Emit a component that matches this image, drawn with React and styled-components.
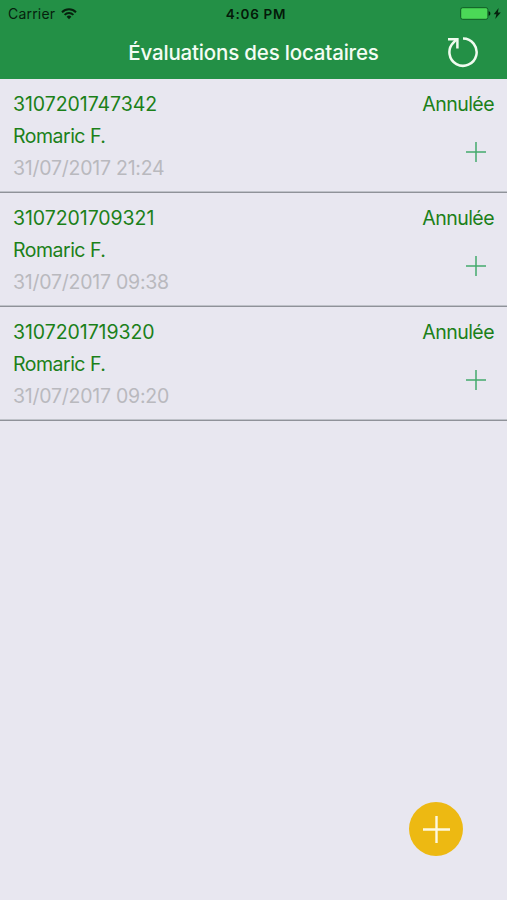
import React from "react";
import styled, { createGlobalStyle } from "styled-components";

const GlobalStyle = createGlobalStyle`
  * {
    box-sizing: border-box;
  }

  body {
    margin: 0;
    background: #e8e7f0;
    font-family: Inter, "Liberation Sans", sans-serif;
  }
`;

const Screen = styled.div`
  display: flex;
  flex-direction: column;
  width: 507px;
  height: 900px;
  background: #e8e7f0;
`;

const Header = styled.header`
  height: 79px;
  background: #239046;
`;

const StatusBar = styled.div`
  display: grid;
  grid-template-columns: 1fr auto 1fr;
  align-items: center;
  height: 27px;
  padding: 0 5px 0 8px;
  color: #06210d;
`;

const Carrier = styled.div`
  display: flex;
  align-items: center;
  gap: 6px;
  font-size: 14px;
  letter-spacing: 0.2px;
`;

const Clock = styled.div`
  padding-left: 2px;
  font-size: 13.5px;
  font-weight: 600;
  letter-spacing: 0.7px;
  color: #041a09;
`;

const Battery = styled.div`
  display: flex;
  justify-content: flex-end;
`;

const NavBar = styled.div`
  display: grid;
  grid-template-columns: 80px 1fr 80px;
  align-items: center;
  height: 51px;
`;

const Title = styled.h1`
  margin: 0;
  font-size: 20.5px;
  font-weight: 550;
  letter-spacing: -0.18px;
  text-align: center;
  white-space: nowrap;
  color: #f4fcf4;
`;

const IconButton = styled.button`
  display: flex;
  margin: 0;
  padding: 0;
  border: none;
  background: none;
`;

const RefreshButton = styled(IconButton)`
  margin: -2px 0 0 20px;
`;

const List = styled.ul`
  margin: 0;
  padding: 0;
  list-style: none;
`;

const Row = styled.li`
  display: flex;
  justify-content: space-between;
  height: 114px;
  padding: 9px 13px 0;
  border-bottom: 1px solid #8f9299;
  box-shadow: inset 0 -1px #bfc2c9;
`;

const Column = styled.div`
  display: flex;
  flex-direction: column;
  align-items: ${({ $end }) => ($end ? "flex-end" : "flex-start")};
`;

const Line = styled.span`
  font-size: 19.5px;
  line-height: 32px;
  letter-spacing: ${({ $spacing }) => $spacing || "0"};
  color: ${({ $muted }) => ($muted ? "#b9b9be" : "#1b8019")};
`;

const AddButton = styled(IconButton)`
  margin: 22px 8px 0 0;
`;

const Footer = styled.footer`
  display: flex;
  justify-content: flex-end;
  margin-top: auto;
  padding: 0 44px 44px 0;
`;

const RoundButton = styled(IconButton)`
  align-items: center;
  justify-content: center;
  width: 54px;
  height: 54px;
  border-radius: 50%;
  background: #edb912;
`;

const evaluations = [
  { id: "3107201747342", tenant: "Romaric F.", date: "31/07/2017 21:24", status: "Annulée" },
  { id: "3107201709321", tenant: "Romaric F.", date: "31/07/2017 09:38", status: "Annulée" },
  { id: "3107201719320", tenant: "Romaric F.", date: "31/07/2017 09:20", status: "Annulée" },
];

const WifiIcon = () => (
  <svg width="16" height="12" viewBox="0 0 16 12" fill="none" stroke="#06210d" strokeWidth="2">
    <path d="M1 4.2a10 10 0 0 1 14 0" />
    <path d="M3.6 6.9a6.3 6.3 0 0 1 8.8 0" />
    <path d="M8 11.2L5.6 8.8a3.4 3.4 0 0 1 4.8 0z" fill="#06210d" stroke="none" />
  </svg>
);

const BatteryIcon = () => (
  <svg width="42" height="13" viewBox="0 0 42 13">
    <rect x="0.7" y="0.7" width="27.2" height="11.6" rx="2" fill="#4bd857" stroke="#0f5a24" strokeWidth="1" />
    <path d="M28.6 4.3c2.4 .3 2.4 4.1 0 4.4z" fill="#06210d" />
    <path d="M38.6 1l-4.9 6.2h2.7l-1.2 4.8 5.6-6.4h-2.9z" fill="#06210d" />
  </svg>
);

const RefreshIcon = () => (
  <svg width="32" height="32" viewBox="0 0 32 32" fill="none" stroke="#f0fbef" strokeWidth="2.5">
    <path d="M16 2.6A13.6 13.6 0 1 1 6.2 6.8L9.6 3.2" />
    <path d="M1 3.2h9.4v9.4" />
  </svg>
);

const PlusIcon = ({ size, color, stroke }) => (
  <svg width={size} height={size} viewBox={`0 0 ${size} ${size}`} stroke={color} strokeWidth={stroke}>
    <path d={`M0 ${size / 2}H${size}M${size / 2} 0V${size}`} />
  </svg>
);

const Evaluation = ({ id, tenant, date, status }) => (
  <Row>
    <Column>
      <Line $spacing="-0.06px">{id}</Line>
      <Line $spacing="-0.5px">{tenant}</Line>
      <Line $muted $spacing="-0.24px">{date}</Line>
    </Column>
    <Column $end>
      <Line $spacing="-0.55px">{status}</Line>
      <AddButton type="button" aria-label="Ajouter">
        <PlusIcon size={20} color="#43ab6c" stroke={1.5} />
      </AddButton>
    </Column>
  </Row>
);

const App = () => (
  <>
    <GlobalStyle />
    <Screen>
      <Header>
        <StatusBar>
          <Carrier>
            Carrier
            <WifiIcon />
          </Carrier>
          <Clock>4:06 PM</Clock>
          <Battery>
            <BatteryIcon />
          </Battery>
        </StatusBar>
        <NavBar>
          <span />
          <Title>Évaluations des locataires</Title>
          <RefreshButton type="button" aria-label="Actualiser">
            <RefreshIcon />
          </RefreshButton>
        </NavBar>
      </Header>
      <List>
        {evaluations.map((evaluation) => (
          <Evaluation key={evaluation.id} {...evaluation} />
        ))}
      </List>
      <Footer>
        <RoundButton type="button" aria-label="Nouvelle évaluation">
          <PlusIcon size={27} color="#fdf8e0" stroke={2.4} />
        </RoundButton>
      </Footer>
    </Screen>
  </>
);

export default App;
